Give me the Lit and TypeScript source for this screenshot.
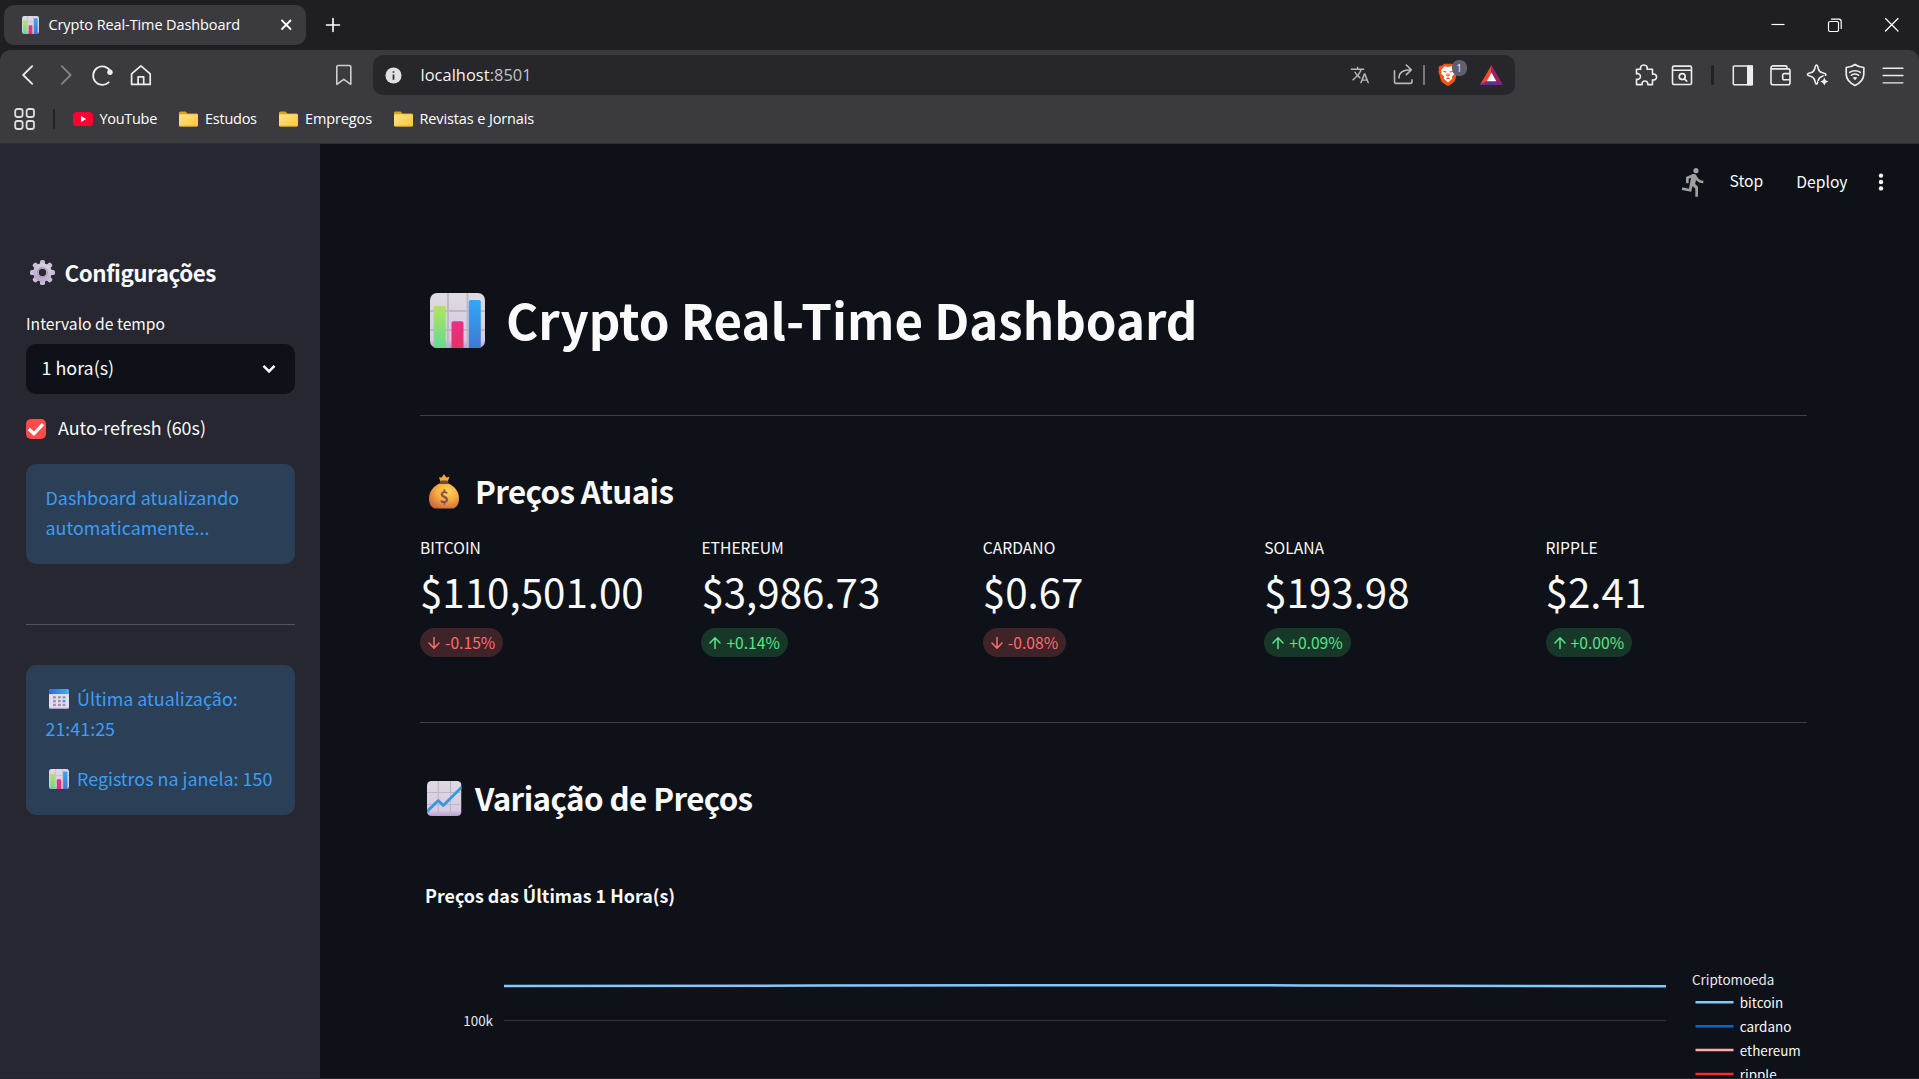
import { LitElement, html, svg, css } from "lit";
import { customElement, property } from "lit/decorators.js";

const sheetEmoji = (kind: string) => svg`
  <defs>
    <linearGradient id="paper" x1="0" y1="0" x2="0" y2="1"><stop offset="0" stop-color="#dedae3"/><stop offset=".85" stop-color="#d6cae2"/><stop offset="1" stop-color="#b79ccb"/></linearGradient>
    <linearGradient id="green" x1="0" y1="0" x2="0" y2="1"><stop offset="0" stop-color="#b4e45c"/><stop offset="1" stop-color="#5edb90"/></linearGradient>
    <linearGradient id="pink" x1="0" y1="0" x2="0" y2="1"><stop offset="0" stop-color="#ee2d88"/><stop offset="1" stop-color="#e03462"/></linearGradient>
    <linearGradient id="blue" x1="0" y1="0" x2="0" y2="1"><stop offset="0" stop-color="#31a9f6"/><stop offset="1" stop-color="#4275cf"/></linearGradient>
    <clipPath id="sheet"><rect width="55" height="55" rx="7"/></clipPath>
  </defs>
  <g clip-path="url(#sheet)">
    <rect width="55" height="55" fill="url(#paper)"/>
    <path d="M18 0V55M37.5 0V55M0 18H55M0 37H55" stroke="#bdb7c3" stroke-width="1.8"/>
    ${kind === "bars"
      ? svg`<rect x="3.7" y="13" width="12" height="44" rx="1.8" fill="url(#green)"/>
        <rect x="21.5" y="28.3" width="12" height="30" rx="1.8" fill="url(#pink)"/>
        <rect x="38.8" y="7" width="12" height="50" rx="1.8" fill="url(#blue)"/>`
      : svg`<path d="M-1 49L18 30.5L26 38.5L56 9" fill="none" stroke="#3b97dc" stroke-width="4.4" stroke-linejoin="round"/>`}
  </g>`;

const bagEmoji = svg`
  <defs>
    <radialGradient id="bag" cx=".62" cy=".3" r=".75"><stop offset="0" stop-color="#fcd45a"/><stop offset=".5" stop-color="#f5ab42"/><stop offset="1" stop-color="#cf6a3c"/></radialGradient>
  </defs>
  <path d="M10 3.2L12.6 3.6L15 .2L17.4 3.6L20.5 2.8L18.6 8H11.6Z" fill="#f3a83c"/>
  <path d="M10.5 9.5C4 12.500 0 18 0 24.500C0 31 3 34.600 8 34.600H22C27 34.600 30 31 30 24.500C30 18 26 12.500 19.500 9.500Z" fill="url(#bag)"/>
  <rect x="11.200" y="6.600" width="7.800" height="3.200" rx="1.200" fill="#6d4846"/>
  <text x="15" y="28.500" text-anchor="middle" font-family="Noto Sans CJK JP, sans-serif" font-weight="700" font-size="16" fill="#8a5049">$</text>`;

const gearEmoji = svg`
  <defs><linearGradient id="gear" x1=".7" y1="0" x2=".3" y2="1"><stop offset="0" stop-color="#dad3e1"/><stop offset="1" stop-color="#b6a3cc"/></linearGradient></defs>
  <g fill="url(#gear)">
    ${[0, 45, 90, 135, 180, 225, 270, 315].map(
      (a) => svg`<rect x="9.600" y="0" width="4.800" height="6" rx="1.800" transform="rotate(${a} 12 12)" fill="#cbbfd8"/>`
    )}
    <path fill-rule="evenodd" d="M12 3a9 9 0 1 0 0 18a9 9 0 0 0 0-18zM12 8.500a3.500 3.500 0 1 1 0 7a3.500 3.500 0 0 1 0-7z"/>
  </g>
  <circle cx="12" cy="12" r="4.600" fill="none" stroke="#a99bbb" stroke-width="1.300"/>`;

const calendarEmoji = svg`
  <defs>
    <linearGradient id="cal" x1="0" x2="1"><stop offset="0" stop-color="#2a68e8"/><stop offset="1" stop-color="#35b6f6"/></linearGradient>
    <clipPath id="page"><rect width="20" height="20" rx="2.600"/></clipPath>
  </defs>
  <g clip-path="url(#page)">
    <rect width="20" height="20" fill="#e4dcee"/><rect y="18.800" width="20" height="2" fill="#b79cd0"/>
    <rect width="20" height="5" fill="url(#cal)"/>
    ${[7.2, 11, 14.8].map((y) => [4, 9, 13.6].map((x) => svg`<rect x="${x}" y="${y}" width="2.800" height="2.300" fill="${x > 13 && y === 11 ? "#2f9cf0" : "#9b91a8"}"/>`))}
  </g>`;

const stroke = (d: string, w = 1.6) =>
  svg`<path d="${d}" fill="none" stroke="currentColor" stroke-width="${w}" stroke-linecap="round" stroke-linejoin="round"/>`;

const art: Record<string, [string, unknown]> = {
  bars: ["0 0 55 55", sheetEmoji("bars")],
  trend: ["0 0 55 55", sheetEmoji("trend")],
  bag: ["0 0 30 35", bagEmoji],
  gear: ["0 0 24 24", gearEmoji],
  calendar: ["0 0 20 20", calendarEmoji],
  close: ["0 0 24 24", stroke("M8 7.500L16.500 16M16.500 7.500L8 16", 1.8)],
  plus: ["0 0 24 24", stroke("M12 5.500V18.500M5.500 12H18.500", 1.6)],
  minimise: ["0 0 24 24", svg`<path d="M5.500 11.500H18.500" stroke="currentColor" stroke-width="1.200"/>`],
  restore: ["0 0 24 24", stroke("M7 8.500H14A1.500 1.500 0 0 1 15.500 10V17A1.500 1.500 0 0 1 14 18.500H7A1.500 1.500 0 0 1 5.500 17V10A1.500 1.500 0 0 1 7 8.500ZM8.500 6.200H15.800A2.400 2.400 0 0 1 18.200 8.600V15.500", 1.2)],
  exit: ["0 0 24 24", stroke("M5.500 5.500L18 18M18 5.500L5.500 18", 1.3)],
  back: ["0 0 24 24", stroke("M16.200 3.200L7.200 12L16.200 20.800", 1.8)],
  forward: ["0 0 24 24", stroke("M7.800 3.200L16.600 12L7.800 20.800", 1.8)],
  reload: ["0 0 24 24", svg`${stroke("M16.700 19.300A9.200 9.200 0 1 1 18.300 8", 1.8)}<circle cx="18" cy="9.200" r="2.700" fill="currentColor"/>`],
  home: ["0 0 24 24", stroke("M1.600 10.900L10.900 2.900L20.200 10.900V21.400H1.600ZM8.100 21.400V13.900H13.700V21.400", 1.7)],
  bookmark: ["0 0 24 24", stroke("M4.800 4.300A1.500 1.500 0 0 1 6.300 2.500H17.300A1.500 1.500 0 0 1 18.800 4.300V21.300L11.800 16.300L4.800 21.300Z", 1.6)],
  info: ["0 0 18 18", svg`<circle cx="9" cy="9" r="8.500" fill="#dfdfe4"/><path d="M9 8V13.500M9 4.400V6.200" stroke="#29292d" stroke-width="1.800"/>`],
  apps: ["0 0 22 22", svg`<g fill="none" stroke="currentColor" stroke-width="1.800"><rect x="1.200" y="1" width="7.400" height="8" rx="2.200"/><rect x="12.600" y="1" width="7.400" height="8" rx="2.200"/><rect x="1.200" y="13" width="7.400" height="8" rx="2.200"/><rect x="12.600" y="13" width="7.400" height="8" rx="2.200"/></g>`],
  youtube: ["0 0 20 14", svg`<rect width="20" height="14" rx="3.600" fill="#ff0033"/><path d="M8 4L13.200 7L8 10Z" fill="#fff"/>`],
  folder: ["0 0 19 17", svg`<defs><linearGradient id="fold" x1="0" y1="0" x2="1" y2="1"><stop offset="0" stop-color="#ffe488"/><stop offset="1" stop-color="#f8c63a"/></linearGradient></defs><path d="M0 2A1.500 1.500 0 0 1 1.500 .4H6.500L8.500 2.600H17.500A1.500 1.500 0 0 1 19 4.100V9H0Z" fill="#dfa01c"/><rect x="0" y="3.400" width="19" height="13.200" rx="1.400" fill="url(#fold)"/><path d="M1 16.200H18" stroke="#d69c20" stroke-width=".8"/>`],
  translate: ["0 0 24 24", svg`<path fill="currentColor" d="M12.870 15.070l-2.540-2.510.030-.030c1.740-1.940 2.980-4.170 3.710-6.530H17V4.300h-7V2H8.300v2.300H1v1.700h11.170C11.500 7.920 10.440 9.750 9 11.350 8.070 10.320 7.300 9.190 6.690 8h-1.800c.73 1.630 1.730 3.170 2.980 4.560l-5.290 5.020L3.800 18.800l5.200-5 3.110 3.110zM18.400 10h-1.800L12 22h1.800l1.220-3h5.050L21.200 22h1.800zm-2.620 7.400l1.720-4.730L19.220 17.400z"/>`],
  share: ["0 0 22 22", stroke("M1.500 7.900V18.400A2 2 0 0 0 3.500 20.400H17A2 2 0 0 0 19 18.400V16.900M6 14.900C6 9.400 9.500 6.800 18 6.800M13.300 2L18.300 6.800L13.300 11.600", 1.6)],
  brave: ["0 0 20 24", svg`<path d="M5.800 .8H14.200L16 2.800L18 2.600L19.600 5L18.900 7L19.600 8.800L16.800 18.500C16 20.600 12.500 22.500 10 24C7.500 22.500 4 20.600 3.200 18.500L.4 8.800L1.100 7L.4 5L2 2.600L4 2.800Z" fill="#fb5412"/><path d="M10 4.300L13.500 3.500L17 7.600L16.300 9.500L16.900 11L13.900 14L14.300 16.500L10 20L5.700 16.500L6.100 14L3.100 11L3.700 9.500L3 7.600L6.500 3.500Z" fill="#fff"/><path d="M5 8L8.600 8.800L8.200 10L5.500 9.400ZM15 8L11.400 8.800L11.800 10L14.500 9.400ZM8.800 10.800L8.200 13.200L10 14.200L11.800 13.200L11.200 10.800L10.400 11V13H9.600V11ZM7.400 15.700L10 15L12.600 15.700L10 17Z" fill="#fb5412"/>`],
  bat: ["0 0 23 20", svg`<path d="M11.500 0L0 20L7 16L11.500 8.200Z" fill="#ff4724"/><path d="M11.500 0L23 20L16 16L11.500 8.200Z" fill="#9e1f63"/><path d="M0 20H23L16 16H7Z" fill="#662d91"/><path d="M11.500 7.600L16.300 16.200H6.700Z" fill="#fff"/>`],
  puzzle: ["0 0 24 24", stroke("M2.500 6.200H6.700A3.400 3.100 0 1 1 13 6.200H18.500V11.200A3 3 0 1 1 18.500 16.800V21.600H13.700A2.900 2.900 0 1 0 8.100 21.600H2.500V16.200A2.900 2.900 0 1 0 2.500 10.800Z", 1.6)],
  tabsearch: ["0 0 24 24", svg`${stroke("M2.500 4.600A1.500 1.500 0 0 1 4 3.100H20A1.500 1.500 0 0 1 21.500 4.600V20A1.500 1.500 0 0 1 20 21.500H4A1.500 1.500 0 0 1 2.500 20ZM2.500 7.200H21.500", 1.6)}${stroke("M15.200 13.600A3 3 0 1 1 9.200 13.600A3 3 0 1 1 15.200 13.600ZM14.500 15.900L16.700 18.100", 1.7)}`],
  panel: ["0 0 24 24", svg`${stroke("M3.300 3H20.300A1 1 0 0 1 21.300 4V20.800A1 1 0 0 1 20.300 21.800H3.300A1 1 0 0 1 2.300 20.800V4A1 1 0 0 1 3.300 3Z", 1.5)}<rect x="16" y="2.400" width="6" height="20" fill="currentColor"/>`],
  wallet: ["0 0 24 24", stroke("M19 5.900V4.400A1.500 1.500 0 0 0 17.500 2.900H5A2 2 0 0 0 3 4.900V19.700A2 2 0 0 0 5 21.700H20A2 2 0 0 0 22 19.700V7.900A2 2 0 0 0 20 5.900H3.300M22 10.600H16.500A1.500 1.500 0 0 0 14.700 12.400V15A1.500 1.500 0 0 0 16.500 16.800H22", 1.6)],
  sparkle: ["0 0 24 24", svg`${stroke("M10.500 2C11.500 2 11.700 3 12.200 5.500C12.800 8 14 9.200 16.500 9.800C19 10.400 20 10.500 20 11.500C20 12.500 19 12.700 16.500 13.200C14 13.800 12.800 15 12.200 17.500C11.700 20 11.500 21 10.500 21C9.500 21 9.300 20 8.800 17.500C8.200 15 7 13.800 4.500 13.200C2 12.700 1.500 12.500 1.500 11.500C1.500 10.500 2 10.400 4.500 9.800C7 9.200 8.200 8 8.800 5.500C9.300 3 9.500 2 10.500 2Z", 1.6)}<path d="M18.300 14.600L19.600 17.300L22.300 18.600L19.600 19.900L18.300 22.600L17 19.900L14.300 18.600L17 17.300Z" fill="currentColor" stroke="#3b3a3e" stroke-width="2.400" paint-order="stroke"/>`],
  shield: ["0 0 24 24", svg`${stroke("M12 1.500C14.500 3.400 17.500 4.300 20.800 4.500V11C20.800 16.500 17 20 12 22.500C7 20 3.200 16.500 3.200 11V4.500C6.500 4.300 9.500 3.400 12 1.500Z", 1.7)}${stroke("M6.700 9.300C9.500 7.200 14.500 7.200 17.300 9.300M8.500 12.200C10.500 10.800 13.500 10.800 15.500 12.200", 1.6)}<path d="M9.800 14.700C11 13.800 13 13.800 14.200 14.700L12 17.200Z" fill="currentColor"/>`],
  menu: ["0 0 24 24", stroke("M2.200 3.800H21.800M2.200 12.600H21.800M2.200 21.400H21.800", 1.7)],
  run: ["0 0 24 24", svg`<path fill="currentColor" d="M13.490 5.480c1.100 0 2-.9 2-2s-.9-2-2-2-2 .9-2 2 .9 2 2 2zm-3.600 13.900l1-4.400 2.100 2v6h2v-7.500l-2.100-2 .6-3c1.300 1.500 3.300 2.500 5.500 2.500v-2c-1.900 0-3.500-1-4.300-2.400l-1-1.600c-.4-.6-1-1-1.700-1-.3 0-.5.1-.8.1l-5.200 2.200v4.700h2v-3.400l1.800-.7-1.600 8.100-4.900-1-.4 2 7 1.400z"/>`],
  dots: ["0 0 6 18", svg`<circle cx="3" cy="2.600" r="2.200" fill="currentColor"/><circle cx="3" cy="9" r="2.200" fill="currentColor"/><circle cx="3" cy="15.400" r="2.200" fill="currentColor"/>`],
  chevron: ["0 0 16 12", svg`<path d="M2.500 2.800L8 8.300L13.500 2.800" fill="none" stroke="currentColor" stroke-width="2.600"/>`],
  check: ["0 0 20 20", svg`<path d="M2.800 10L8 14.800L17 5.200" fill="none" stroke="#fff" stroke-width="3.200"/>`],
  up: ["0 0 14 14", stroke("M7 12.500V2M2 7L7 1.800L12 7", 1.5)],
  down: ["0 0 14 14", stroke("M7 1.500V12M2 7L7 12.200L12 7", 1.5)],
};

@customElement("app-icon")
class AppIcon extends LitElement {
  static styles = css`
    :host { display: block; flex: none; width: 24px; height: 24px; }
    svg { display: block; width: 100%; height: 100%; overflow: visible; }
  `;
  @property() name = "";
  render() {
    const [box, body] = art[this.name];
    return html`<svg viewBox=${box} preserveAspectRatio="none">${body}</svg>`;
  }
}

@customElement("browser-chrome")
class BrowserChrome extends LitElement {
  static styles = css`
    :host { display: block; font-family: "Open Sans", "Noto Sans", sans-serif; color: #fff; background: #1f1e23; }
    .row { display: flex; align-items: center; }
    .tabs { height: 50px; box-sizing: border-box; padding-left: 4px; }
    .tab { width: 302px; height: 40px; box-sizing: border-box; border-radius: 10px; background: #3b3a3e; padding: 0 8px 0 18px; }
    .fav { width: 17px; height: 18px; }
    .title { margin-left: 9.5px; flex: 1; font-size: 14.5px; letter-spacing: -0.1px; white-space: nowrap; padding-bottom: 2px; }
    .add { margin-left: 15px; }
    .win { margin-left: auto; gap: 33px; padding-right: 15.5px; height: 50px; }
    .bar { background: #3b3a3e; border-radius: 10px 10px 0 0; height: 50px; box-sizing: border-box; padding: 0 14.5px 0 15.5px; color: #ededf0; }
    .nav { gap: 14px; }
    .dim { color: #858488; }
    .mark { margin-left: 178px; color: #cfcfd2; }
    .address { margin-left: 17.5px; width: 1142px; height: 40px; box-sizing: border-box; border-radius: 10px; background: #27262b; padding: 0 12px 0 11.5px; }
    .info { width: 17px; height: 17px; margin-top: 1px; }
    .url { margin-left: 19px; flex: 1; font-size: 16.4px; letter-spacing: 0.05px; line-height: 24px; padding-bottom: 1px; color: #f3f3f5; }
    .port { color: #c4c4c8; }
    .tr { width: 20px; height: 20px; color: #b8b8bc; }
    .sh { width: 22px; height: 22px; margin-left: 22.5px; margin-top: -2px; color: #b8b8bc; }
    .line { width: 1.5px; height: 20px; background: #77767b; margin-left: 8.5px; }
    .bravebox { margin-left: 13.5px; position: relative; width: 20px; height: 24px; }
    .brave { width: 20px; height: 23px; }
    .badge { position: absolute; left: 13.5px; top: -3px; width: 15px; height: 16px; border-radius: 7px; background: #5d616f; font-size: 10px; line-height: 16px; text-align: center; }
    .bat { width: 23px; height: 20px; margin-left: 22px; }
    .right { margin-left: auto; }
    .sep { width: 2.5px; height: 20px; border-radius: 2px; background: #222226; }
    .a { margin-left: 12px; }
    .b { margin: 0 17px; }
    .c { margin-left: 13.5px; }
    .m { height: 20px; }
    .marks { background: #3b3a3e; height: 44px; box-sizing: border-box; padding: 0 0 6px 14px; border-bottom: 1px solid #313035; font-size: 14.5px; letter-spacing: -0.12px; }
    .apps { width: 22px; height: 22px; color: #dedee1; }
    .marksep { margin: 0 18px 0 16.5px; }
    .yt { width: 20px; height: 14px; }
    .fold { width: 19px; height: 16px; margin-right: 7px; }
    .link { white-space: nowrap; padding-bottom: 1px; }
    .l0 { width: 79.5px; margin-left: 6.5px; letter-spacing: -0.3px; }
    .l1 { width: 74px; letter-spacing: -0.25px; }
    .l2 { width: 88.500px; }
  `;
  render() {
    return html`
      <div class="row tabs">
        <div class="row tab">
          <app-icon class="fav" name="bars"></app-icon>
          <span class="title">Crypto Real-Time Dashboard</span>
          <app-icon name="close"></app-icon>
        </div>
        <app-icon class="add" name="plus"></app-icon>
        <div class="row win">
          <app-icon name="minimise"></app-icon><app-icon name="restore"></app-icon><app-icon name="exit"></app-icon>
        </div>
      </div>
      <div class="row bar">
        <div class="row nav">
          <app-icon name="back"></app-icon>
          <app-icon class="dim" name="forward"></app-icon>
          <app-icon name="reload"></app-icon>
          <app-icon name="home"></app-icon>
        </div>
        <app-icon class="mark" name="bookmark"></app-icon>
        <div class="row address">
          <app-icon class="info" name="info"></app-icon>
          <span class="url">localhost<span class="port">:8501</span></span>
          <app-icon class="tr" name="translate"></app-icon>
          <app-icon class="sh" name="share"></app-icon>
          <span class="line"></span>
          <span class="bravebox"><app-icon class="brave" name="brave"></app-icon><span class="badge">1</span></span>
          <app-icon class="bat" name="bat"></app-icon>
        </div>
        <div class="row right">
          <app-icon name="puzzle"></app-icon>
          <app-icon class="a" name="tabsearch"></app-icon>
          <span class="sep b"></span>
          <app-icon name="panel"></app-icon>
          <app-icon class="c" name="wallet"></app-icon>
          <app-icon class="c" name="sparkle"></app-icon>
          <app-icon class="c" name="shield"></app-icon>
          <app-icon class="c m" name="menu"></app-icon>
        </div>
      </div>
      <div class="row marks">
        <app-icon class="apps" name="apps"></app-icon>
        <span class="sep marksep"></span>
        <app-icon class="yt" name="youtube"></app-icon>
        <span class="link l0">YouTube</span>
        ${["Estudos", "Empregos", "Revistas e Jornais"].map(
          (t, i) => html`<app-icon class="fold" name="folder"></app-icon><span class="link l${i + 1}">${t}</span>`
        )}
      </div>
    `;
  }
}

@customElement("side-bar")
class SideBar extends LitElement {
  static styles = css`
    :host { display: block; width: 320px; box-sizing: border-box; background: #262730; padding: 113px 25px 0 26px; color: #fafafa; font-size: 17.9px; }
    h2 { margin: 0; display: flex; align-items: center; font-size: 22.4px; font-weight: 600; line-height: 30px; padding-left: 4px; letter-spacing: -0.46px; }
    .gear { width: 25px; height: 25px; margin: 1px 9.5px 0 0; }
    .label { margin-top: 24px; font-size: 15.67px; line-height: 26px; }
    .select { margin-top: 7px; height: 50px; box-sizing: border-box; border-radius: 10px; background: #0e1117; display: flex; align-items: center; justify-content: space-between; padding: 0 18px 4px 15.5px; }
    .chev { width: 16px; height: 12px; margin-top: 4px; }
    .check { margin-top: 20px; height: 30px; display: flex; align-items: center; gap: 12px; line-height: 26px; }
    .check span:last-child { padding-bottom: 4px; }
    .box { width: 20px; height: 20px; border-radius: 5px; background: #ff4b4b; }
    .info { margin-top: 20px; padding: 18px 20px 22px 19.5px; border-radius: 10px; background: #2b3f57; color: #3d9df3; line-height: 30px; }
    .info p { margin: 0 -10px 20px 0; }
    .info p:last-child { margin-bottom: 0; }
    hr { margin: 60px 0 40px; border: 0; height: 1px; background: #505159; }
    .em { display: inline-block; width: 20px; height: 20px; margin: 0 8px 0 3.5px; vertical-align: -3px; }
  `;
  render() {
    return html`
      <h2><app-icon class="gear" name="gear"></app-icon>Configurações</h2>
      <div class="label">Intervalo de tempo</div>
      <div class="select"><span>1 hora(s)</span><app-icon class="chev" name="chevron"></app-icon></div>
      <div class="check"><app-icon class="box" name="check"></app-icon><span>Auto-refresh (60s)</span></div>
      <div class="info"><p>Dashboard atualizando<br />automaticamente...</p></div>
      <hr />
      <div class="info">
        <p><app-icon class="em" name="calendar"></app-icon>Última atualização:<br />21:41:25</p>
        <p><app-icon class="em" name="bars"></app-icon>Registros na janela: 150</p>
      </div>
    `;
  }
}

const metrics = [
  { name: "BITCOIN", value: "$110,501.00", delta: "-0.15%" },
  { name: "ETHEREUM", value: "$3,986.73", delta: "+0.14%" },
  { name: "CARDANO", value: "$0.67", delta: "-0.08%" },
  { name: "SOLANA", value: "$193.98", delta: "+0.09%" },
  { name: "RIPPLE", value: "$2.41", delta: "+0.00%" },
];

const legend = [
  ["bitcoin", "#83c9ff"],
  ["cardano", "#0068c9"],
  ["ethereum", "#ffabab"],
  ["ripple", "#ff2b2b"],
];

@customElement("main-panel")
class MainPanel extends LitElement {
  static styles = css`
    :host { display: block; flex: 1; min-width: 0; background: #0e1117; color: #fafafa; }
    header { display: flex; justify-content: flex-end; align-items: center; height: 76px; font-size: 15.67px; padding-right: 35.5px; }
    .run { width: 32px; height: 32px; color: #a0a0a3; }
    .stop { margin-left: 20px; padding-bottom: 3px; }
    .deploy { margin-left: 33px; padding-bottom: 1px; }
    .dots { width: 6px; height: 18px; margin-left: 30px; margin-top: -1px; }
    .body { margin: 0 112px 0 100px; }
    h1 { margin: 65px 0 0; height: 70px; box-sizing: border-box; padding-bottom: 2px; display: flex; align-items: center; font-size: 49.2px; font-weight: 700; line-height: 68px; }
    .e1 { width: 55px; height: 55px; margin: 2px 21px 0 10px; }
    hr { border: 0; height: 1px; background: #3d4045; }
    .first { margin: 60px 0 54px; }
    .second { margin: 65px 0 54px; }
    h3 { margin: 0; height: 42px; display: flex; align-items: center; font-size: 31.3px; font-weight: 600; line-height: 42px; white-space: nowrap; letter-spacing: -0.58px; }
    .e2 { width: 30px; height: 35px; margin: 1px 16px 0 9px; }
    .e3 { width: 34.5px; height: 35px; margin: 1px 13.5px 0 7px; }
    .metrics { display: grid; grid-template-columns: repeat(5, 1fr); gap: 20px; margin-top: 23px; }
    .name { font-size: 15.67px; line-height: 26px; }
    .value { font-size: 40.3px; line-height: 60px; }
    .chip { display: flex; width: fit-content; align-items: center; height: 29px; border-radius: 15px; padding: 0 8px 0 7px; margin-top: 7px; font-size: 15.67px; line-height: 29px; }
    .up { color: #5ce488; background: #173828; }
    .down { color: #ff6c6c; background: #3e2328; }
    .arrow { width: 14px; height: 14px; margin-right: 4px; }
    .chart { display: block; margin-top: 35px; font-family: inherit; }
  `;
  render() {
    return html`
      <header>
        <app-icon class="run" name="run"></app-icon>
        <span class="stop">Stop</span><span class="deploy">Deploy</span>
        <app-icon class="dots" name="dots"></app-icon>
      </header>
      <div class="body">
        <h1><app-icon class="e1" name="bars"></app-icon>Crypto Real-Time Dashboard</h1>
        <hr class="first" />
        <h3><app-icon class="e2" name="bag"></app-icon>Preços Atuais</h3>
        <div class="metrics">
          ${metrics.map((m) => {
            const dir = m.delta[0] === "-" ? "down" : "up";
            return html`<div>
              <div class="name">${m.name}</div>
              <div class="value">${m.value}</div>
              <div class="chip ${dir}"><app-icon class="arrow" name=${dir}></app-icon>${m.delta}</div>
            </div>`;
          })}
        </div>
        <hr class="second" />
        <h3><app-icon class="e3" name="trend"></app-icon>Variação de Preços</h3>
        <svg class="chart" width="1387" height="225" viewBox="420 854 1387 225">
          <text x="425" y="903" font-size="17.900" font-weight="700" fill="#fafafa">Preços das Últimas 1 Hora(s)</text>
          <text x="493" y="1026" font-size="13.430" fill="#e6eaf1" text-anchor="end">100k</text>
          <path d="M504 1020.500H1666" stroke="#31333f" stroke-width="1"/>
          <path d="M504 985.900L820 985.600L1100 985.200L1300 985.400L1666 986.300" fill="none" stroke="#83c9ff" stroke-width="2.500"/>
          <text x="1692" y="985.300" font-size="13.430" fill="#e6eaf1">Criptomoeda</text>
          ${legend.map(
            ([n, c], i) => svg`<path d="M1695.500 ${1002.300 + i * 23.900}h38" stroke="${c}" stroke-width="2.500"/>
              <text x="1739.800" y="${1008.300 + i * 23.900}" font-size="13.430" fill="#fafafa">${n}</text>`
          )}
        </svg>
      </div>
    `;
  }
}

@customElement("app-root")
class AppRoot extends LitElement {
  static styles = css`
    :host { display: flex; flex-direction: column; width: 1919px; height: 1079px; overflow: hidden; background: #0e1117; font-family: "Noto Sans CJK JP", "Noto Sans", sans-serif; }
    .page { flex: 1; min-height: 0; display: flex; overflow: hidden; box-sizing: border-box; border-bottom: 1px solid #24242c; }
  `;
  render() {
    return html`<browser-chrome></browser-chrome>
      <div class="page"><side-bar></side-bar><main-panel></main-panel></div>`;
  }
}
